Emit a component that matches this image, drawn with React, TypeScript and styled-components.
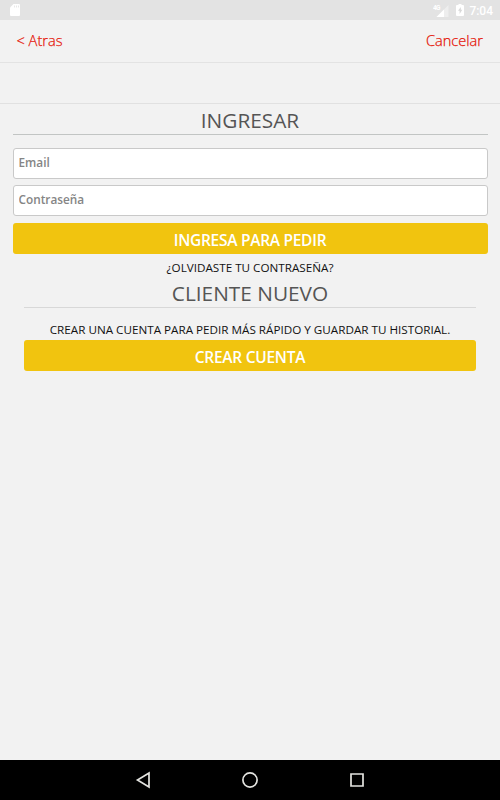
import React from 'react';
import styled, { createGlobalStyle } from 'styled-components';

const GlobalStyle = createGlobalStyle`
  * { box-sizing: border-box; }
  body { margin: 0; background: #f2f2f2; font-family: "Open Sans", "Noto Sans", sans-serif; }
`;

const Screen = styled.div`
  display: flex;
  flex-direction: column;
  width: 500px;
  height: 800px;
  background: #f2f2f2;
  overflow: hidden;
`;

const StatusBar = styled.div`
  display: flex;
  align-items: center;
  height: 20px;
  flex: none;
  padding: 0 7px 0 10px;
  background: #e3e3e3;
  color: #fff;
`;

const Clock = styled.span`
  margin-left: 5.5px;
  font: 500 12px/20px Roboto, sans-serif;
  padding-top: 1px;
`;

const StatusIcon = styled.svg<{ $push?: boolean; $gap?: number }>`
  flex: none;
  display: block;
  margin-left: ${(p) => (p.$push ? 'auto' : `${p.$gap ?? 0}px`)};
`;

const TopBar = styled.header`
  display: flex;
  justify-content: space-between;
  align-items: flex-start;
  flex: none;
  height: 43px;
  padding: 0 17px 0 16.5px;
  border-bottom: 1px solid #e3e3e3;
`;

const NavLink = styled.button`
  padding: 0;
  border: 0;
  background: none;
  color: #e51205;
  font: 300 14.6px/40px "Open Sans", sans-serif;
  -webkit-text-stroke: 0.25px #e51205;
`;

const SubBar = styled.div`
  flex: none;
  height: 41px;
  border-bottom: 1px solid #e1e1e1;
`;

const Content = styled.main`
  flex: 1;
  padding: 0 12.5px;
`;

const Section = styled.section<{ $inset?: boolean }>`
  display: flex;
  flex-direction: column;
  padding: 0 ${(p) => (p.$inset ? 11.5 : 0)}px;
`;

const Title = styled.h1<{ $line: string; $gap: number; $height: number }>`
  margin: 0 0 ${(p) => p.$gap}px;
  height: ${(p) => p.$height}px;
  border-bottom: 1px solid ${(p) => p.$line};
  color: #555;
  text-align: center;
  font-size: 20.8px;
  font-weight: 400;
  line-height: 33px;
`;

const Field = styled.input`
  width: 100%;
  height: 31px;
  margin: 0 0 6px;
  padding: 0 5px 3.5px;
  border: 1px solid #c9c9c9;
  border-radius: 3px;
  background: #fff;
  font: 600 11.8px "Open Sans", sans-serif;
  outline: 0;
  &::placeholder { color: #858585; opacity: 1; }
`;

const Button = styled.button<{ $top?: number }>`
  width: 100%;
  height: 31px;
  margin-top: ${(p) => p.$top ?? 0}px;
  padding: 3px 0 0;
  border: 0;
  border-radius: 3px;
  background: #f1c40f;
  color: #fff;
  font: 600 15.5px/28px "Open Sans", sans-serif;
  letter-spacing: -0.28px;
`;

const Note = styled.p<{ $height: number; $offset?: number }>`
  margin: 0;
  height: ${(p) => p.$height}px;
  padding-top: ${(p) => p.$offset ?? 0}px;
  color: #111;
  text-align: center;
  font-size: 11.68px;
  font-weight: 400;
  line-height: 20px;
  white-space: nowrap;
`;

const NavigationBar = styled.nav`
  display: flex;
  align-items: center;
  justify-content: center;
  gap: 90px;
  flex: none;
  height: 40px;
  background: #000;
`;

const NavIcon = styled.svg`
  display: block;
  fill: none;
  stroke: #e4e4e0;
  stroke-width: 1.7;
`;

export default function App() {
  return (
    <Screen>
      <GlobalStyle />
      <StatusBar>
        <StatusIcon width="10" height="12" viewBox="0 0 10 12">
          <path d="M3.5 0H9a1 1 0 0 1 1 1v10a1 1 0 0 1-1 1H1a1 1 0 0 1-1-1V3.5z" fill="#fff" />
          <path d="M4.5 1.5v2M6.5 1.5v2M8.5 1.5v2" stroke="#e2e2e2" strokeWidth=".8" />
        </StatusIcon>
        <StatusIcon $push width="16" height="13" viewBox="0 0 16 13">
          <path d="M15.5 1v12H3.5z" fill="#eee" />
          <path d="M11 5.5V13H3.5z" fill="#fff" />
          <text x="0" y="5.7" fill="#fff" fontFamily="Roboto" fontSize="6.5" fontWeight="700" textLength="7.5">4G</text>
        </StatusIcon>
        <StatusIcon $gap={7} width="8" height="12" viewBox="0 0 8 12">
          <path d="M2.5 0h3v1H7a1 1 0 0 1 1 1v9a1 1 0 0 1-1 1H1a1 1 0 0 1-1-1V2a1 1 0 0 1 1-1h1.5z" fill="#fff" />
          <path d="M4.8 3 2 6.8h1.6v3.2L6.3 5.8H4.8z" fill="#d8d8d8" />
        </StatusIcon>
        <Clock>7:04</Clock>
      </StatusBar>
      <TopBar>
        <NavLink>&lt; Atras</NavLink>
        <NavLink>Cancelar</NavLink>
      </TopBar>
      <SubBar />
      <Content>
        <Section>
          <Title $line="#c2c5c4" $gap={13} $height={31}>INGRESAR</Title>
          <Field type="email" placeholder="Email" />
          <Field type="password" placeholder="Contraseña" />
          <Button $top={0.5}>INGRESA PARA PEDIR</Button>
          <Note $height={23.5} $offset={4}>¿OLVIDASTE TU CONTRASEÑA?</Note>
        </Section>
        <Section $inset>
          <Title $line="#d8d8d8" $gap={12} $height={31}>CLIENTE NUEVO</Title>
          <Note $height={20}>CREAR UNA CUENTA PARA PEDIR MÁS RÁPIDO Y GUARDAR TU HISTORIAL.</Note>
          <Button>CREAR CUENTA</Button>
        </Section>
      </Content>
      <NavigationBar>
        <NavIcon width="16" height="18" viewBox="0 0 16 18"><path d="M14 2v14L2.5 9z" /></NavIcon>
        <NavIcon width="18" height="18" viewBox="0 0 18 18"><circle cx="9" cy="9" r="7.1" /></NavIcon>
        <NavIcon width="16" height="18" viewBox="0 0 16 18"><path d="M2 3h12v12h-12z" /></NavIcon>
      </NavigationBar>
    </Screen>
  );
}
